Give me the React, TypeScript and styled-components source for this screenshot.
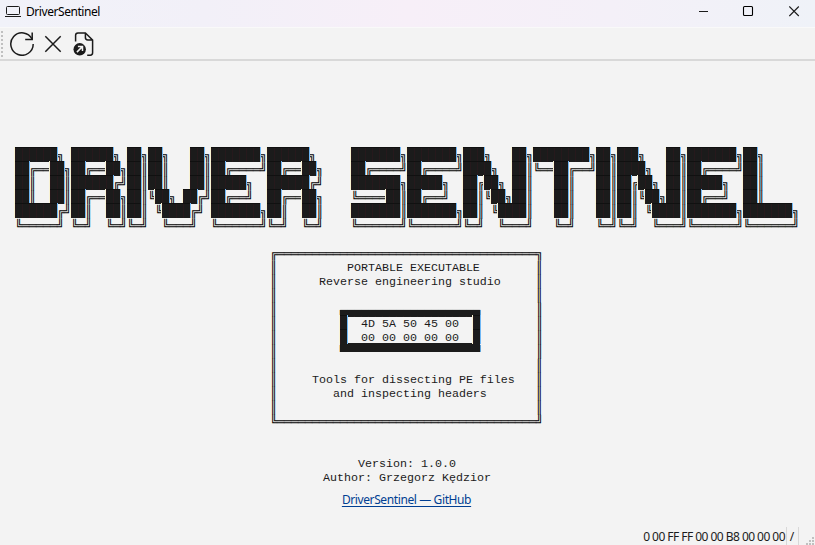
import React from "react";
import styled, { createGlobalStyle } from "styled-components";

const GlobalStyle = createGlobalStyle`
  * { box-sizing: border-box; }
  html, body { margin: 0; padding: 0; overflow: hidden; }
  body { background: #f3f3f3; font-family: "Noto Sans", "Open Sans", sans-serif; color: #1b1b1b; }
`;

const Window = styled.div`
  display: flex;
  flex-direction: column;
  width: 815px;
  height: 545px;
  background: #f3f3f3;
`;

const TitleBar = styled.header`
  display: flex;
  align-items: center;
  flex: none;
  height: 27px;
  padding: 0 15px 3px 5px;
  background: linear-gradient(90deg, #f1f2f9 0%, #f2f0f8 25%, #f7eff8 50%, #f4f0f8 75%, #eff2f8 100%);
`;

const Title = styled.span`
  margin-left: 5px;
  font-size: 12px;
  line-height: 16px;
  letter-spacing: -0.44px;
  color: #000;
`;

const WindowControls = styled.div`
  display: flex;
  align-items: center;
  gap: 34px;
  margin: -2px 0 0 auto;

  svg { display: block; }
`;

const Toolbar = styled.nav`
  display: flex;
  align-items: center;
  flex: none;
  height: 34px;
  border-top: 1px solid #f9f9f9;
  border-bottom: 2px solid #d8d8d8;
`;

const Grip = styled.div`
  width: 2px;
  height: 26px;
  margin: 0 7px 0 1px;
  background: repeating-linear-gradient(#c0c0c0 0 2px, transparent 2px 4px);
`;

const ToolButton = styled.button<{ $width: number }>`
  display: flex;
  align-items: center;
  justify-content: center;
  width: ${(p) => p.$width}px;
  height: 31px;
  padding: 1px 0 0;
  border: 0;
  background: none;
  color: #1b1b1b;
`;

const Content = styled.main`
  display: flex;
  flex-direction: column;
  align-items: center;
  flex: 1;
  padding-top: 86px;
`;

const Banner = styled.div`
  display: flex;
  flex-direction: column;
  align-items: flex-start;
  width: 785px;
`;

const Line = styled.div<{ $indent: number }>`
  display: flex;
  height: 14px;
  margin-left: ${(p) => p.$indent * 7}px;
  white-space: pre;
`;

const MonoText = styled.span`
  padding-top: 2px;
  font: 11.667px/14px "Liberation Mono", monospace;
  color: #1b1b1b;
`;

const BoxText = styled.span`
  padding-top: 2px;
  font: 12px/14px "DejaVu Sans Mono", monospace;
  letter-spacing: -0.2246px;
  color: #000;
`;

const HalfText = styled(BoxText)<{ $lower: boolean }>`
  height: ${(p) => (p.$lower ? 15 : 9)}px;
  color: #1b1b1b;
  background: ${(p) => (p.$lower ? "linear-gradient(transparent 9px, #1b1b1b 9px)" : "#1b1b1b")};
`;

const SolidText = styled(BoxText)<{ $cells: number }>`
  position: relative;
  width: ${(p) => p.$cells * 7}px;
  height: 15px;
  overflow: clip;
  color: #1b1b1b;
  background: #1b1b1b;
  box-shadow: 1px 0 #6fb7f5, -1px 0 #f8f2d2;

  /* Faint seams between neighbouring cells. */
  &::after {
    content: "";
    position: absolute;
    inset: 0;
    background:
      linear-gradient(#101010 0 1px, transparent 1px),
      repeating-linear-gradient(90deg, #26191c 0 1px, transparent 1px 7px);
  }
`;

const GithubLink = styled.a`
  margin: 9px 0 0 -2px;
  font-size: 12px;
  line-height: 16px;
  letter-spacing: -0.39px;
  color: #003e92;
  text-decoration: underline;
  text-underline-offset: 2px;
`;

const StatusBar = styled.footer`
  display: flex;
  align-items: flex-end;
  justify-content: flex-end;
  flex: none;
  height: 18px;
  font-size: 12px;
  line-height: 19px;
`;

const StatusField = styled.span<{ $width?: number; $spacing?: number }>`
  display: flex;
  justify-content: center;
  width: ${(p) => (p.$width ? `${p.$width}px` : "auto")};
  height: 18px;
  padding-right: 1px;
  border-right: 1px solid #d8d8d8;
  letter-spacing: ${(p) => p.$spacing ?? 0}px;
  white-space: nowrap;
`;

const SizeGrip = styled.svg`
  margin: 0 1px 0 7px;
`;

const LOGO = [
  "██████╗ ██████╗ ██╗██╗   ██╗███████╗██████╗     ███████╗███████╗███╗   ██╗████████╗██╗███╗   ██╗███████╗██╗",
  "██╔══██╗██╔══██╗██║██║   ██║██╔════╝██╔══██╗    ██╔════╝██╔════╝████╗  ██║╚══██╔══╝██║████╗  ██║██╔════╝██║",
  "██║  ██║██████╔╝██║██║   ██║█████╗  ██████╔╝    ███████╗█████╗  ██╔██╗ ██║   ██║   ██║██╔██╗ ██║█████╗  ██║",
  "██║  ██║██╔══██╗██║╚██╗ ██╔╝██╔══╝  ██╔══██╗    ╚════██║██╔══╝  ██║╚██╗██║   ██║   ██║██║╚██╗██║██╔══╝  ██║",
  "██████╔╝██║  ██║██║ ╚████╔╝ ███████╗██║  ██║    ███████║███████╗██║ ╚████║   ██║   ██║██║ ╚████║███████╗███████╗",
  "╚═════╝ ╚═╝  ╚═╝╚═╝  ╚═══╝  ╚══════╝╚═╝  ╚═╝    ╚══════╝╚══════╝╚═╝  ╚═══╝   ╚═╝   ╚═╝╚═╝  ╚═══╝╚══════╝╚══════╝",
];

const framed = (text = "", indent = 0) =>
  "║" + (" ".repeat(Math.max(indent - 1, 0)) + text).padEnd(37) + "║";

const CARD = [
  "╔" + "═".repeat(37) + "╗",
  framed("PORTABLE EXECUTABLE", 11),
  framed("Reverse engineering studio", 7),
  framed(),
  framed("▄".repeat(20), 10),
  framed("█  4D 5A 50 45 00  █", 10),
  framed("█  00 00 00 00 00  █", 10),
  framed("▀".repeat(20), 10),
  framed(),
  framed("Tools for dissecting PE files", 6),
  framed("and inspecting headers", 9),
  framed(),
  "╚" + "═".repeat(37) + "╝",
];

function ArtLine({ text, indent = 0 }: { text: string; indent?: number }) {
  const runs = text.match(/█+|[▄▀]+|[╔╗╚╝═║]+|[^█╔╗╚╝═║▄▀]+/g) ?? [" "];
  return (
    <Line $indent={indent}>
      {runs.map((run, i) => {
        const first = run[0];
        if (first === "█") return <SolidText key={i} $cells={run.length}>{run}</SolidText>;
        if (first === "▄" || first === "▀") return <HalfText key={i} $lower={first === "▄"}>{run}</HalfText>;
        if ("╔╗╚╝═║".includes(first)) return <BoxText key={i}>{run}</BoxText>;
        return <MonoText key={i}>{run}</MonoText>;
      })}
    </Line>
  );
}

const icon = { fill: "none", stroke: "currentColor" };

export default function App() {
  return (
    <>
      <GlobalStyle />
      <Window>
        <TitleBar>
          <svg width="16" height="12" viewBox="0 0 16 12" {...icon}>
            <rect x="1.5" y="0.5" width="13" height="8" rx="1" />
            <path d="M0 10.5H16" />
          </svg>
          <Title>DriverSentinel</Title>
          <WindowControls>
            <svg width="11" height="11" viewBox="0 0 11 11" {...icon}>
              <path d="M-1 5.5H9" overflow="visible" />
            </svg>
            <svg width="11" height="11" viewBox="0 0 11 11" overflow="visible" {...icon}>
              <rect x="-0.5" y="0.5" width="9" height="9" rx="1" stroke="#000" strokeWidth="1.1" />
            </svg>
            <svg width="11" height="11" viewBox="0 0 11 11" {...icon}>
              <path d="M0.3 0.5L9.8 10M9.8 0.5L0.3 10" strokeWidth="1.1" />
            </svg>
          </WindowControls>
        </TitleBar>
        <Toolbar>
          <Grip />
          <ToolButton $width={24} aria-label="Refresh">
            <svg width="24" height="24" viewBox="0 0 24 24" {...icon} strokeWidth="1.5">
              <path d="M22 7A11.2 11.2 0 1 0 23.2 12" />
              <path d="M22.2 0.6V7.4H15.2" />
            </svg>
          </ToolButton>
          <ToolButton $width={37} aria-label="Close file">
            <svg width="18" height="18" viewBox="0 0 18 18" {...icon} strokeWidth="1.5">
              <path d="M1.3 1.3L16.7 16.7M16.7 1.3L1.3 16.7" />
            </svg>
          </ToolButton>
          <ToolButton $width={24} aria-label="Open file">
            <svg width="22" height="24" viewBox="0 0 22 24" {...icon} strokeWidth="1.5">
              <path d="M3.6 9.6V3.3Q3.6 0.9 6 0.9H13.4L20.6 8V20.8Q20.6 23.2 18.2 23.2H15.2M13.4 0.9V5.6Q13.4 8 15.8 8H20.6" />
              <circle cx="7.7" cy="17.3" r="6.2" fill="currentColor" stroke="none" />
              <path d="M4.9 20.1L10.1 14.9M5.9 14.5H10.5V19.1" stroke="#f3f3f3" />
            </svg>
          </ToolButton>
        </Toolbar>
        <Content>
          <Banner>
            {LOGO.map((text, i) => (
              <ArtLine key={i} text={text} />
            ))}
            <Line $indent={0} />
            {CARD.map((text, i) => (
              <ArtLine key={i} text={text} indent={255 / 7} />
            ))}
            <Line $indent={0} />
            <Line $indent={0} />
            <ArtLine text="Version: 1.0.0" indent={49} />
            <ArtLine text="Author: Grzegorz Kędzior" indent={44} />
          </Banner>
          <GithubLink href="#">DriverSentinel — GitHub</GithubLink>
        </Content>
        <StatusBar>
          <StatusField $spacing={-0.54}>0 00 FF FF 00 00 B8 00 00 00</StatusField>
          <StatusField $width={12}>/</StatusField>
          <SizeGrip width="8" height="8" viewBox="0 0 8 8" fill="#c0c0c0">
            <path d="M6 0h2v2h-2zM3 3h2v2h-2zM6 3h2v2h-2zM0 6h2v2h-2zM3 6h2v2h-2zM6 6h2v2h-2z" />
          </SizeGrip>
        </StatusBar>
      </Window>
    </>
  );
}
